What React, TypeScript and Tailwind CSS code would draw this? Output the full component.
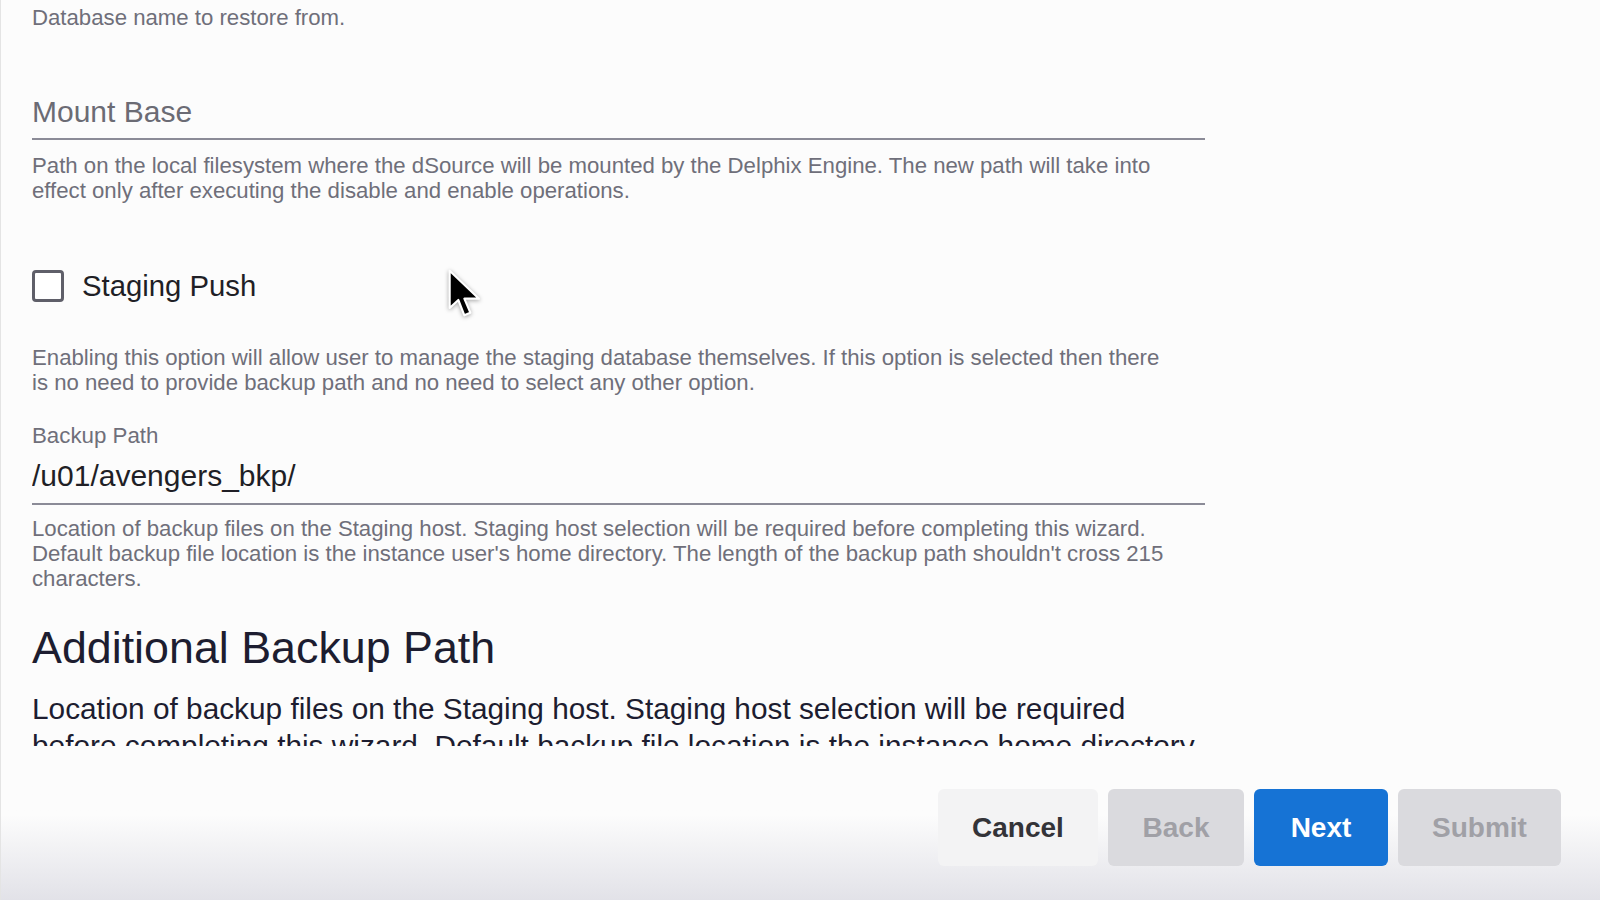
import { useState } from "react";

const descClass = "w-[1147px] text-[22.2px] leading-[25px] text-[#6f6f7a]";

function Cursor() {
	// mouse pointer captured in the screenshot
	return (
		<svg
			className="pointer-events-none absolute left-[446px] top-[268px] drop-shadow-[0_1px_2px_rgba(0,0,0,0.35)]"
			width="40"
			height="56"
			viewBox="0 0 30 42"
		>
			<path
				d="M2 2 L2 30 L8.5 24 L13 35.5 L17.5 33.5 L13 23 L24 23 Z"
				fill="#000"
				stroke="#fff"
				strokeWidth="1.6"
				strokeLinejoin="round"
			/>
		</svg>
	);
}

export default function App() {
	const [stagingPush, setStagingPush] = useState(false);
	const [backupPath, setBackupPath] = useState("/u01/avengers_bkp/");

	return (
		<div className="relative flex h-[900px] w-full flex-col overflow-hidden border-l border-[#e4e4e4] bg-[#fcfcfc] font-['Liberation_Sans',Arial,sans-serif]">
			<div className="h-[746px] overflow-hidden pl-[31px]">
				<div className="w-[1173px]">
					<p className="pt-[5px] text-[22.2px] leading-[25px] text-[#6f6f7a]">
						Database name to restore from.
					</p>

					{/* Mount Base */}
					<div className="mt-[64px] border-b-2 border-[#8b8b97] pb-[8px]">
						<input
							className="h-[36px] w-full bg-transparent text-[30px] leading-[36px] text-[#1f1f26] outline-none placeholder:text-[#6b6b74]"
							placeholder="Mount Base"
						/>
					</div>
					<p className={`mt-[13px] ${descClass}`}>
						Path on the local filesystem where the dSource will be mounted by
						the Delphix Engine. The new path will take into effect only after
						executing the disable and enable operations.
					</p>

					{/* Staging Push */}
					<label className="mt-[67px] flex h-[32px] cursor-pointer items-center gap-[18px]">
						<button
							type="button"
							onClick={() => setStagingPush(!stagingPush)}
							className="h-[32px] w-[32px] rounded-[4px] border-[3px] border-[#5f5f69] bg-white"
						/>
						<span className="text-[29.3px] leading-[32px] text-[#1f1f26]">
							Staging Push
						</span>
					</label>
					<p className={`mt-[43px] ${descClass}`}>
						Enabling this option will allow user to manage the staging database
						themselves. If this option is selected then there is no need to
						provide backup path and no need to select any other option.
					</p>

					{/* Backup Path */}
					<p className="mt-[28px] text-[22.3px] leading-[25px] text-[#6f6f7a]">
						Backup Path
					</p>
					<div className="mt-[9px] border-b-2 border-[#8b8b97] pb-[9px]">
						<input
							className="h-[37px] w-full bg-transparent text-[30px] leading-[37px] text-[#1f1f26] outline-none"
							value={backupPath}
							onChange={(e) => setBackupPath(e.target.value)}
						/>
					</div>
					<p className={`mt-[11px] ${descClass}`}>
						Location of backup files on the Staging host. Staging host selection
						will be required before completing this wizard. Default backup file
						location is the instance user's home directory. The length of the
						backup path shouldn't cross 215 characters.
					</p>

					<h2 className="mt-[30px] text-[44.8px] leading-[52px] text-[#1d1d30]">
						Additional Backup Path
					</h2>
					<p className="mt-[17px] text-[29.8px] leading-[37px] text-[#1d1d30]">
						Location of backup files on the Staging host. Staging host selection
						will be required before completing this wizard. Default backup file
						location is the instance home directory.
					</p>
				</div>
			</div>

			{/* Wizard footer */}
			<div className="flex flex-1 items-start justify-end gap-[10px] bg-linear-to-b from-[#fcfcfc] from-45% to-[#e2e2e8] pr-[39px] pt-[43px]">
				<button
					type="button"
					className="h-[77px] w-[160px] rounded-[6px] bg-[#f3f3f4] text-[28px] font-bold text-[#333338]"
				>
					Cancel
				</button>
				<button
					type="button"
					disabled
					className="h-[77px] w-[136px] rounded-[6px] bg-[#dadade] text-[28px] font-bold text-[#a0a0a6]"
				>
					Back
				</button>
				<button
					type="button"
					className="h-[77px] w-[134px] rounded-[6px] bg-[#1673d5] text-[28px] font-bold text-white"
				>
					Next
				</button>
				<button
					type="button"
					disabled
					className="h-[77px] w-[163px] rounded-[6px] bg-[#dadade] text-[28px] font-bold text-[#a0a0a6]"
				>
					Submit
				</button>
			</div>

			<Cursor />
		</div>
	);
}
